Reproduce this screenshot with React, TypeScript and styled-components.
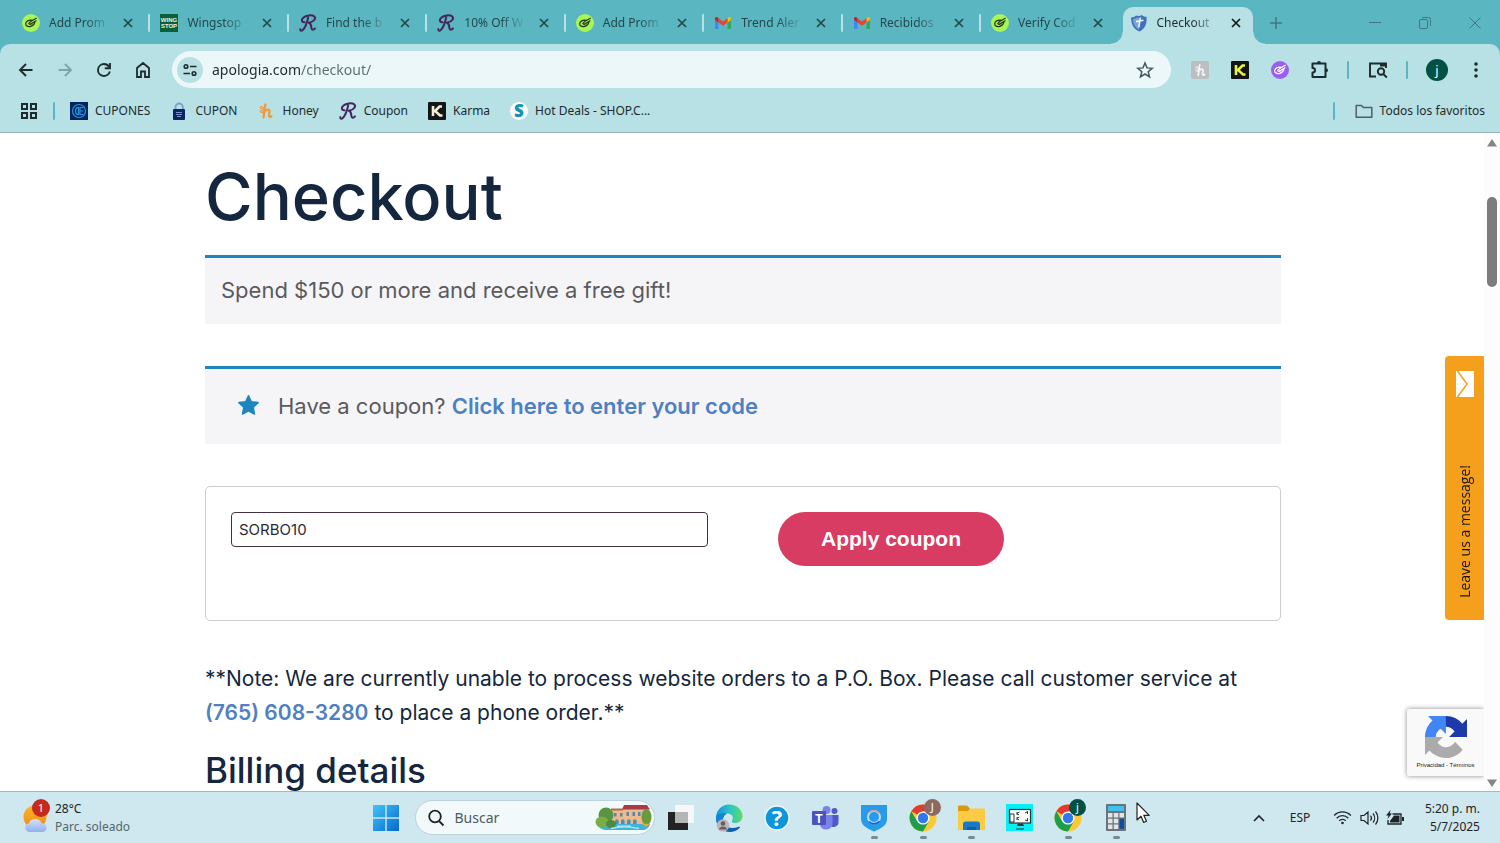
import React from "react";
import styled, { createGlobalStyle, css } from "styled-components";

const uiFont = `"Noto Sans", "Open Sans", sans-serif`;
const pageFont = `Inter, "Open Sans", sans-serif`;

const GlobalStyle = createGlobalStyle`
  *, *::before, *::after { box-sizing: border-box; }
  html, body { margin: 0; height: 100%; }
  body { background: #fff; font-family: ${uiFont}; }
  button, input { font: inherit; color: inherit; margin: 0; }
  button { background: none; border: 0; padding: 0; cursor: pointer; }
  svg { display: block; flex: none; overflow: visible; }
`;

/* ---------- window ---------- */

const Desktop = styled.div`
  display: flex;
  flex-direction: column;
  height: 100vh;
  overflow: hidden;
`;

/* ---------- tab strip ---------- */

const TabStrip = styled.header`
  display: flex;
  flex: none;
  height: 44px;
  background: #5ab6c0;
  color: #24474d;
`;

const TabList = styled.nav`
  display: flex;
  width: 83.8%;
  padding-left: 11px;
`;

const Tab = styled.div<{ $divider?: boolean }>`
  position: relative;
  display: flex;
  flex: 1 1 0;
  align-items: center;
  gap: 9px;
  min-width: 0;
  padding: 2px 15px 0 11px;

  ${(p) =>
    p.$divider &&
    css`
      &::after {
        content: "";
        position: absolute;
        right: -1px;
        top: 14px;
        width: 2px;
        height: 18px;
        border-radius: 1px;
        background: #b7e1e4;
      }
    `}
`;

const ActiveShape = styled.span`
  position: absolute;
  inset: 7px 4px 0 4px;
  border-radius: 10px 10px 0 0;
  background: #b7e1e4;

  &::before,
  &::after {
    content: "";
    position: absolute;
    bottom: 0;
    width: 12px;
    height: 12px;
  }
  &::before {
    left: -12px;
    background: radial-gradient(circle at 0 0, transparent 11px, #b7e1e4 12px);
  }
  &::after {
    right: -12px;
    background: radial-gradient(circle at 100% 0, transparent 11px, #b7e1e4 12px);
  }
`;

const TabIcon = styled.span`
  position: relative;
  flex: none;
  width: 18px;
  height: 18px;
`;

const TabTitle = styled.span<{ $active?: boolean }>`
  position: relative;
  flex: 1;
  min-width: 0;
  overflow: hidden;
  white-space: nowrap;
  font-size: 12px;
  line-height: 18px;
  color: ${(p) => (p.$active ? "#1d2b2e" : "#24474d")};
  mask-image: linear-gradient(90deg, #000 36px, transparent 62px);
`;

const TabClose = styled.button`
  position: relative;
  flex: none;
  width: 12px;
  height: 12px;
`;

const NewTab = styled.button`
  display: grid;
  place-items: center;
  width: 38px;
  padding-top: 2px;
`;

const WindowControls = styled.div`
  display: flex;
  margin-left: auto;
`;

const WindowButton = styled.button`
  display: grid;
  place-items: center;
  width: 50px;
  padding-top: 2px;
  color: #3f7780;
`;

/* ---------- toolbar and bookmarks ---------- */

const ChromeFrame = styled.div`
  flex: none;
  background: #5ab6c0;
`;

const ChromePanel = styled.div`
  border-bottom: 1px solid #94b4b9;
  border-radius: 10px 10px 0 0;
  background: #b7e1e4;
  color: #1d2b2e;
`;

const Toolbar = styled.div`
  display: flex;
  align-items: center;
  height: 51px;
  padding: 0 8px 0 6px;
`;

const ToolButton = styled.button<{ $width: number }>`
  display: grid;
  place-items: center;
  flex: none;
  width: ${(p) => p.$width}px;
  height: 36px;
`;

const Omnibox = styled.div`
  display: flex;
  flex: 1;
  align-items: center;
  height: 37px;
  margin: 0 9px 0 10px;
  padding: 0 17px 0 5px;
  border-radius: 19px;
  background: #ebf7f9;
`;

const SiteInfo = styled.button`
  display: grid;
  place-items: center;
  flex: none;
  width: 26px;
  height: 26px;
  border-radius: 50%;
  background: #b7e1e4;
`;

const AddressInput = styled.input`
  flex: 1;
  min-width: 0;
  padding: 0 0 0 9px;
  border: 0;
  outline: 0;
  background: linear-gradient(90deg, #1d2b2e 98px, #5b6c70 98px);
  background-clip: text;
  -webkit-text-fill-color: transparent;
  font-size: 14px;
  line-height: 20px;
`;

const Divider = styled.span`
  flex: none;
  width: 2px;
  height: 18px;
  border-radius: 1px;
  background: #5ab6c0;
`;

const Avatar = styled.span`
  display: grid;
  place-items: center;
  width: 22px;
  height: 22px;
  border-radius: 50%;
  background: #035045;
  color: #fff;
  font-size: 13px;
  line-height: 20px;
`;

const BookmarksBar = styled.nav`
  display: flex;
  align-items: center;
  gap: 15px;
  height: 37px;
  padding: 0 15px 6px 20px;
  font-size: 12px;
  line-height: 18px;
`;

const BookmarkGroup = styled.div<{ $end?: boolean }>`
  display: flex;
  align-items: center;
  gap: 20px;
  margin-left: ${(p) => (p.$end ? "auto" : 0)};
`;

const Bookmark = styled.a`
  display: flex;
  align-items: center;
  gap: 7px;
  white-space: nowrap;
  color: inherit;
  text-decoration: none;
`;

/* ---------- web page ---------- */

const Viewport = styled.div`
  position: relative;
  display: flex;
  flex: 1;
  min-height: 0;
`;

const Page = styled.main`
  flex: 1;
  min-width: 0;
  padding-left: 2px;
  overflow: hidden;
  background: #fff;
  font-family: ${pageFont};
`;

const Column = styled.div`
  max-width: 1076px;
  margin: 0 auto;
  padding-top: 24px;
  color: #14273e;
`;

const Title = styled.h1`
  margin: 0 0 18px;
  font-size: 65px;
  font-weight: 500;
  line-height: 80px;
`;

const Notice = styled.div<{ $roomy?: boolean }>`
  display: flex;
  align-items: center;
  gap: 18px;
  min-height: ${(p) => (p.$roomy ? 78 : 69)}px;
  margin-bottom: 42px;
  padding: ${(p) => (p.$roomy ? "0 32px 2px" : "0 16px 2px")};
  border-top: 3px solid #1e85be;
  background: #f5f5f8;
  color: #5a5a5e;
  font-size: 22px;
  line-height: 32px;
`;

const PageLink = styled.a`
  color: #4f80c1;
  font-weight: 600;
  text-decoration: none;
`;

const CouponForm = styled.form`
  display: grid;
  grid-template-columns: 1fr 1fr;
  align-items: start;
  gap: 70px;
  min-height: 135px;
  margin-bottom: 41px;
  padding: 25px;
  border: 1px solid #cfcdd1;
  border-radius: 5px;
`;

const CouponInput = styled.input`
  width: 100%;
  height: 35px;
  padding: 0 7px;
  border: 1px solid #43303c;
  border-radius: 4px;
  background: #fff;
  color: #2b2b33;
  font-size: 15px;
`;

const ApplyButton = styled.button`
  justify-self: start;
  height: 54px;
  padding: 0 43px;
  border-radius: 27px;
  background: #d83c63;
  color: #fff;
  font-family: "Liberation Sans", Arial, sans-serif;
  font-size: 21px;
  font-weight: 700;
`;

const Note = styled.p`
  margin: 0 0 19px;
  font-size: 21px;
  line-height: 34px;
`;

const Subtitle = styled.h2`
  margin: 0;
  font-size: 35px;
  font-weight: 500;
  line-height: 42px;
`;

const Scrollbar = styled.div`
  display: flex;
  flex: none;
  flex-direction: column;
  align-items: center;
  width: 16px;
  padding: 6px 0 4px;
  background: #fcfcfc;
`;

const ScrollThumb = styled.div`
  width: 10px;
  height: 90px;
  margin: 50px 0 auto;
  border-radius: 5px;
  background: #7d7d7d;
`;

const MessageTab = styled.button`
  position: absolute;
  top: 223px;
  right: 16px;
  display: flex;
  flex-direction: column;
  align-items: center;
  justify-content: space-between;
  width: 39px;
  height: 264px;
  padding: 15px 0 22px;
  border-radius: 4px 0 0 4px;
  background: #f4a01c;
  color: #1c1508;
`;

const MessageLabel = styled.span`
  writing-mode: vertical-rl;
  transform: rotate(180deg);
  font-family: "Open Sans", sans-serif;
  font-size: 14px;
  line-height: 20px;
`;

const CaptchaBadge = styled.aside`
  position: absolute;
  right: 16px;
  bottom: 15px;
  display: flex;
  flex-direction: column;
  align-items: center;
  gap: 3px;
  width: 77px;
  height: 67px;
  padding-top: 7px;
  border-radius: 2px 0 0 2px;
  background: #f9f9f9;
  box-shadow: 0 0 5px #888;
  clip-path: inset(-6px 0 -6px -6px);
  color: #222;
  font-family: "Liberation Sans", Arial, sans-serif;
  font-size: 6px;
  line-height: 8px;
  white-space: nowrap;
`;

/* ---------- taskbar ---------- */

const Taskbar = styled.footer`
  display: grid;
  grid-template-columns: 1fr auto 1fr;
  align-items: center;
  flex: none;
  height: 52px;
  border-top: 1px solid #a5b9bc;
  background: #cfe7ee;
  color: #1d2427;
  font-size: 12px;
  line-height: 18px;
`;

const Weather = styled.button`
  display: flex;
  align-items: center;
  gap: 5px;
  padding-left: 22px;
  text-align: left;
`;

const Muted = styled.span`
  display: block;
  color: #55666b;
`;

const WeatherIcon = styled.span`
  position: relative;
  width: 28px;
  height: 36px;
`;

const Badge = styled.span<{ $size: number; $color: string }>`
  position: absolute;
  top: -1px;
  right: 0;
  display: grid;
  place-items: center;
  width: ${(p) => p.$size}px;
  height: ${(p) => p.$size}px;
  border-radius: 50%;
  background: ${(p) => p.$color};
  color: #fff;
  font-size: 11px;
  line-height: 12px;
`;

const TaskCenter = styled.div`
  display: flex;
  align-items: center;
`;

const AppButton = styled.button<{ $open?: boolean }>`
  position: relative;
  display: grid;
  place-items: center;
  width: 100%;
  height: 50px;

  ${(p) =>
    p.$open &&
    css`
      &::after {
        content: "";
        position: absolute;
        bottom: 4px;
        left: calc(50% - 3px);
        width: 7px;
        height: 3px;
        border-radius: 2px;
        background: #7b8a8f;
      }
    `}
`;

const StartCell = styled.div`
  width: 52px;
  margin-right: 3px;
`;

const SearchBox = styled.label`
  display: flex;
  align-items: center;
  width: 240px;
  height: 35px;
  margin-right: 2px;
  padding: 0 2px 0 11px;
  border: 1px solid #bdd3d9;
  border-radius: 18px;
  background: #f1f9fb;
`;

const SearchInput = styled.input`
  flex: 1;
  min-width: 0;
  padding: 0 0 0 10px;
  border: 0;
  outline: 0;
  background: none;
  font-size: 14px;

  &::placeholder {
    color: #4f5b5f;
    opacity: 1;
  }
`;

const AppRow = styled.div`
  display: grid;
  grid-template-columns: repeat(10, 1fr);
  width: 484px;
`;

const AppCell = styled.div`
  position: relative;
`;

const Cursor = styled.svg`
  position: absolute;
  left: 44px;
  top: 9px;
`;

const AppIcon = styled.span`
  position: relative;
  display: grid;
  place-items: center;
  width: 36px;
  height: 36px;
`;

const Tray = styled.div`
  display: flex;
  align-items: center;
  justify-content: flex-end;
  padding-right: 20px;
`;

const TrayButton = styled.button<{ $width: number }>`
  display: grid;
  place-items: center;
  width: ${(p) => p.$width}px;
  height: 40px;
`;

const Clock = styled.button`
  width: 69px;
  text-align: right;
`;

/* ---------- icons ---------- */

const HandMark = ({ bg, fg }: { bg: string; fg: string }) => (
  <svg width="18" height="18" viewBox="0 0 18 18" fill="none" stroke={fg} strokeLinecap="round" strokeLinejoin="round">
    <circle cx="9" cy="9" r="9" fill={bg} stroke="none" />
    <path d="M10.300 6.300C7.500 5.400 4 7 3.700 9.600c-.3 2.500 2.500 3.400 5.100 2.700 2.200-.6 3.600-2 4-4M6.800 9.500c1.200-2.200 4-3.400 7.500-5.200M8.200 10.300l5.900-3.500M7 9.800c1 1 2.700.3 3.500-1" strokeWidth="1.200" />
  </svg>
);

const WingMark = () => (
  <svg width="18" height="18" viewBox="0 0 18 18">
    <rect width="18" height="18" fill="#0b6137" />
    <g fill="#e9f5ee" fontFamily="Liberation Sans, sans-serif" fontWeight="700" fontSize="6" textAnchor="middle">
      <text x="9" y="8">WING</text>
      <text x="9" y="14">STOP</text>
    </g>
  </svg>
);

const ScriptMark = () => (
  <svg width="18" height="18" viewBox="0 0 18 18" fill="none" stroke="#46245c" strokeWidth="2" strokeLinecap="round" strokeLinejoin="round">
    <path d="M9.200 3.500C8.200 8 6.700 13.500 3.500 16.300c-1.200.9-2.600.2-2.200-1.200M5.500 8.300C2.500 8.600 2 5.500 4.500 3.500 7 1.500 12.500.6 15 2.200c2.400 1.700.5 5.600-5.200 6.600 2.700.6 2.200 3.200 2.600 5.200.4 2.100 2 2.200 3.600.4" />
  </svg>
);

const MailMark = () => (
  <svg width="18" height="18" viewBox="0 0 18 18">
    <path d="M1 5v9.300c0 .5.400.7.800.7H4.500V8z" fill="#4285f4" />
    <path d="M17 5v9.300c0 .5-.4.7-.8.7H13.500V8z" fill="#34a853" />
    <path d="M13.500 4.200v4.200L17 5.800V4.600c0-1.600-1.700-2.200-2.800-1.200z" fill="#fbbc04" />
    <path d="M4.500 8.400V4.200L9 7.600l4.500-3.400v4.200L9 11.800z" fill="#ea4335" />
    <path d="M1 4.600v1.200l3.500 2.600V4.200l-.7-.6C2.700 2.500 1 3.200 1 4.600z" fill="#c5221f" />
  </svg>
);

const ShieldMark = () => (
  <svg width="18" height="18" viewBox="0 0 18 18">
    <path d="M1 3.500C3 3.600 5 2.800 6 1.500c1.800.8 4.200.6 6-.5 1 1.300 2.600 2 4.500 1.800C17.300 9.500 15 15 9.500 17.500 4 15.500 1.200 10.500 1 3.500z" fill="#3f72b8" />
    <path d="M3 5c1.600 0 3-.6 4-1.500L9 4v11.500C5 13.500 3.200 9.500 3 5z" fill="#7aa3d8" />
    <path d="M10.300 3.500L8.800 13.500M6 7.600l7.500-1.400" stroke="#f2f7fc" strokeWidth="1.600" fill="none" />
  </svg>
);

const CrossIcon = ({ color = "#24474d" }: { color?: string }) => (
  <svg width="12" height="12" viewBox="0 0 12 12" stroke={color} strokeWidth="1.700">
    <path d="M2 2l8 8M10 2l-8 8" />
  </svg>
);

const HoneyMark = ({ color }: { color: string }) => (
  <svg width="18" height="18" viewBox="0 0 18 18" fill="none" stroke={color} strokeLinecap="round" strokeLinejoin="round">
    <path d="M8.500 2.500C7 6 7.500 11 6.500 15.300M7.200 10.500c1.500-3.500 5.800-4 5.300-.6-.3 1.800-1 3.500-.2 4.700.5.800 1.500.5 2-.3" strokeWidth="2.300" />
    <path d="M7.200 6.800C4.500 7.500 2.500 5.900 3.500 4.900s3 .4 3.700 1.900zM7 10.300c-2.500.8-4.500-.2-3.500-1.300 1-.9 2.700.1 3.500 1.300z" strokeWidth="1.100" />
  </svg>
);

const KarmaMark = ({ color }: { color: string }) => (
  <svg width="18" height="18" viewBox="0 0 18 18">
    <rect width="18" height="18" rx="1" fill="#151515" />
    <path d="M5 4v10M14 4.500h-2.500L7 9l5 4.500h2.500" stroke={color} strokeWidth="2.600" fill="none" />
  </svg>
);

const CuponesMark = () => (
  <svg width="18" height="18" viewBox="0 0 18 18" fill="none" stroke="#1f97e0" strokeWidth="1.200">
    <rect width="18" height="18" fill="#06245c" stroke="none" />
    <circle cx="9" cy="9" r="6.500" />
    <path d="M8.500 5.500C4.500 4.800 4.500 13.200 8.500 12.500zM13.500 5.500H10v7h3.500M10 9h3.500" />
  </svg>
);

const LockMark = () => (
  <svg width="18" height="18" viewBox="0 0 18 18">
    <path d="M5.500 8V5.500a3.700 4 0 017.400 0V8" fill="none" stroke="#7d9fc4" strokeWidth="1.800" />
    <rect x="3" y="7" width="12" height="11" rx="1" fill="#0b2463" />
    <path d="M6 10.500h6M6 12.500h6M7 14.500h4" stroke="#7c91c4" strokeWidth="1" />
  </svg>
);

const ShopMark = () => (
  <svg width="18" height="18" viewBox="0 0 18 18">
    <circle cx="9" cy="9" r="9" fill="#fff" />
    <text x="9" y="15" textAnchor="middle" fontFamily="Open Sans, sans-serif" fontWeight="800" fontSize="17" fill="#0f93b8">S</text>
  </svg>
);

const line = { fill: "none", stroke: "currentColor" } as const;

const BackIcon = () => (
  <svg width="18" height="18" viewBox="0 0 18 18" {...line} strokeWidth="1.900"><path d="M15.500 9H3.500M9 3L3 9l6 6" /></svg>
);
const ForwardIcon = () => (
  <svg width="18" height="18" viewBox="0 0 18 18" fill="none" stroke="#7fa3a9" strokeWidth="1.900"><path d="M2.500 9h12M9 3l6 6-6 6" /></svg>
);
const ReloadIcon = () => (
  <svg width="18" height="18" viewBox="0 0 18 18" {...line} strokeWidth="1.900">
    <path d="M14.800 10.500A6 6 0 119 3c2.300 0 4.200 1.200 5.200 3" />
    <path d="M15 2v5.200H9.800" />
  </svg>
);
const HomeIcon = () => (
  <svg width="18" height="18" viewBox="0 0 18 18" {...line} strokeWidth="1.800">
    <path d="M3 7l6-5 6 5v9h-4v-5.500H7V16H3z" />
  </svg>
);
const TuneIcon = () => (
  <svg width="16" height="16" viewBox="0 0 16 16" {...line} strokeWidth="1.600">
    <circle cx="4" cy="4.500" r="1.800" /><path d="M8 4.500h6.500M1.500 11.500H8" /><circle cx="12" cy="11.500" r="1.800" />
  </svg>
);
const StarIcon = () => (
  <svg width="18" height="18" viewBox="0 0 18 18" fill="none" stroke="#46565a" strokeWidth="1.500">
    <path d="M9 2l2 4.900 5.200.4-4 3.400 1.300 5.100L9 13l-4.500 2.800 1.300-5.100-4-3.400L7 6.900z" />
  </svg>
);
const PuzzleIcon = () => (
  <svg width="20" height="20" viewBox="0 0 20 20" {...line} strokeWidth="2">
    <path d="M2.500 3.500h13v13.500h-13v-4.500c1.600 0 2.500-.8 2.500-2.200S4.100 8 2.500 8z" strokeLinejoin="round" />
    <path d="M7 3a2 2 0 014 0zM16 8.200a2 2 0 010 4z" fill="currentColor" stroke="none" />
  </svg>
);
const SidePanelIcon = () => (
  <svg width="20" height="18" viewBox="0 0 20 18" {...line} strokeWidth="1.900">
    <path d="M8 15.500H2V2.500h16V7" /><path d="M12 4h6" strokeWidth="3" />
    <circle cx="13" cy="10.500" r="3.200" /><path d="M15.300 13l3.500 3.500" />
  </svg>
);
const DotsIcon = () => (
  <svg width="6" height="18" viewBox="0 0 6 18" fill="currentColor">
    <circle cx="3" cy="3" r="1.800" /><circle cx="3" cy="9" r="1.800" /><circle cx="3" cy="15" r="1.800" />
  </svg>
);
const GridIcon = () => (
  <svg width="18" height="18" viewBox="0 0 18 18" {...line} strokeWidth="2">
    <rect x="2" y="2" width="5" height="5" /><rect x="11" y="2" width="5" height="5" />
    <rect x="2" y="11" width="5" height="5" /><rect x="11" y="11" width="5" height="5" />
  </svg>
);
const FolderLineIcon = () => (
  <svg width="18" height="18" viewBox="0 0 18 18" fill="none" stroke="#4d6165" strokeWidth="1.500">
    <path d="M1.200 3.500h5.300l1.800 2h8.500v9.700H1.200z" strokeLinejoin="round" />
  </svg>
);

const CouponStar = () => (
  <svg width="23" height="23" viewBox="0 0 24 24" fill="#1e85be" stroke="#1e85be" strokeWidth="1.600" strokeLinejoin="round">
    <path d="M12 1.800l3 6.300 7 .9-5.100 4.900 1.300 7L12 17.600l-6.200 3.300 1.300-7L2 9l7-.9z" />
  </svg>
);
const EnvelopeIcon = () => (
  <svg width="18" height="26" viewBox="0 0 18 26">
    <path d="M0 0h18v26H0z" fill="#fff" />
    <path d="M1.500 0L11 13 1.500 26" fill="none" stroke="#f4a01c" strokeWidth="1.500" />
  </svg>
);
const CaptchaIcon = () => (
  <svg width="42" height="42" viewBox="0 0 64 64">
    <path d="M64 31.955l-.033-1.370V4.687l-7.160 7.160C50.948 4.674 42.033.093 32.050.093c-10.400 0-19.622 4.960-25.458 12.640l11.736 11.860a15.550 15.550 0 0 1 4.754-5.334c2.050-1.600 4.952-2.906 8.968-2.906.485 0 .86.057 1.135.163 4.976.393 9.288 3.140 11.828 7.124l-8.307 8.307L64 31.953" fill="#1c3aa9" />
    <path d="M31.862.094l-1.370.033H4.594l7.160 7.160C4.580 13.147 0 22.060 0 32.046c0 10.400 4.960 19.622 12.640 25.458L24.500 45.768a15.550 15.550 0 0 1-5.334-4.754c-1.600-2.050-2.906-4.952-2.906-8.968 0-.485.057-.86.163-1.135.393-4.976 3.140-9.288 7.124-11.828l8.307 8.307L31.860.095" fill="#4285f4" />
    <path d="M.001 32.045l.033 1.370v25.898l7.160-7.160c5.860 7.173 14.774 11.754 24.760 11.754 10.400 0 19.622-4.960 25.458-12.640l-11.736-11.860a15.550 15.550 0 0 1-4.754 5.334c-2.050 1.600-4.952 2.906-8.968 2.906-.485 0-.86-.057-1.135-.163-4.976-.393-9.288-3.140-11.828-7.124l8.307-8.307c-10.522.040-22.400.066-27.295-.005" fill="#ababab" />
  </svg>
);

const WeatherArt = () => (
  <svg width="28" height="36" viewBox="0 0 28 36">
    <defs>
      <linearGradient id="sun" x2="0" y2="1"><stop stopColor="#fbb42a" /><stop offset="1" stopColor="#ef8a17" /></linearGradient>
      <linearGradient id="cloud" x2="0" y2="1"><stop stopColor="#d5e0fb" /><stop offset="1" stopColor="#8fb0ee" /></linearGradient>
    </defs>
    <circle cx="13" cy="17" r="11.500" fill="url(#sun)" />
    <path d="M7.500 32a4.300 4.300 0 01-.8-8.500 7 7 0 0113 0A4.300 4.300 0 0121 32z" fill="url(#cloud)" />
  </svg>
);
const StartIcon = () => (
  <svg width="26" height="26" viewBox="0 0 26 26">
    <defs><linearGradient id="start" x2="1" y2="1"><stop stopColor="#3fc5fa" /><stop offset="1" stopColor="#0669cc" /></linearGradient></defs>
    <path d="M0 0h12.300v12.300H0zM13.700 0H26v12.300H13.700zM0 13.700h12.300V26H0zM13.700 13.700H26V26H13.700z" fill="url(#start)" />
  </svg>
);
const SearchIcon = () => (
  <svg width="18" height="18" viewBox="0 0 18 18" {...line} strokeWidth="1.800"><circle cx="8" cy="7.500" r="5.800" /><path d="M12 12l4.500 4.500" /></svg>
);
const VillaArt = () => (
  <svg width="57" height="26" viewBox="0 0 57 26">
    <path d="M2 19h53c-1 4-4 6-8 6H12c-5 0-8-2-10-6z" fill="#3fb4d8" />
    <rect x="16" y="4" width="36" height="15" fill="#edb98e" />
    <path d="M29 0h23l3 4.500H27z" fill="#a93a48" />
    <path d="M16 3.500h12v2H16z" fill="#b8674c" />
    <path d="M19 8h2.500v3.500H19zM25 8h2.500v3.500H25zM31.500 7h2.500v4h-2.500zM37.500 7h2.500v4h-2.500zM43 7h2.500v4H43z" fill="#5a86a8" />
    <path d="M20 19v-3a1.800 1.800 0 013.600 0v3zM26 19v-3a1.800 1.800 0 013.600 0v3zM32 19v-3a1.800 1.800 0 013.600 0v3zM38 19v-3a1.800 1.800 0 013.600 0v3z" fill="#4d8fb5" />
    <ellipse cx="11" cy="10" rx="7.500" ry="7.500" fill="#5b9440" />
    <ellipse cx="7" cy="17" rx="6.500" ry="5.500" fill="#79ae47" />
    <ellipse cx="16" cy="19" rx="5" ry="4" fill="#4d8a3c" />
    <ellipse cx="51.500" cy="12" rx="5" ry="8" fill="#6b9a3c" />
    <path d="M46 18.500l9 .5-4 3z" fill="#e0a73c" />
    <path d="M16 23.500c8-2 18-2 28 0M22 21.200h14" stroke="#aee3f1" strokeWidth="1.300" fill="none" />
  </svg>
);
const TaskViewIcon = () => (
  <svg width="28" height="26" viewBox="0 0 28 26">
    <path d="M1 7h20v18H1z" fill="#232323" />
    <path d="M8 0h19v18H8z" fill="#f7f7f7" />
    <path d="M8 7h13v11H8z" fill="#b5b5b5" />
  </svg>
);
const EdgeIcon = () => (
  <svg width="28" height="28" viewBox="0 0 28 28">
    <defs>
      <linearGradient id="edgeTop" x2="1"><stop stopColor="#1b8fdc" /><stop offset=".5" stopColor="#2bc3c9" /><stop offset="1" stopColor="#5edc62" /></linearGradient>
    </defs>
    <path d="M1 14C1 6 7 .5 14 .5c8 0 13.500 5.500 13.500 11.500 0 4.500-3.700 7.200-8 7-2.600-.2-3.300-1.500-2.200-2.800C19 13.500 17 9.500 12.500 9.500 7 9.500 1.500 13 1 14z" fill="url(#edgeTop)" />
    <path d="M1 14c.5-3 6-5.500 10.500-4.200-3.500 2-4.500 6-2.500 9.700 2.500 4.500 8.500 5.500 14 3.500 1.500-.6 2.500-.3 1.800.8C22.500 26.500 19 28 15 28 7 28 .8 21.500 1 14z" fill="#0f5fb0" />
    <path d="M1 14c.5-3 6-5.500 10.500-4.200-5 2.700-5.500 9.500 0 16.200C5.500 26 .8 20.500 1 14z" fill="#1484d8" />
    <circle cx="8" cy="21.500" r="6.200" fill="#b9b5b8" />
    <circle cx="8" cy="19.500" r="2.300" fill="#665d60" /><path d="M4 25.500c.5-4 7.500-4 8 0z" fill="#665d60" />
  </svg>
);
const HelpIcon = () => (
  <svg width="26" height="26" viewBox="0 0 26 26">
    <circle cx="13" cy="13" r="12" fill="#0f95dc" stroke="#eef9fd" strokeWidth="1.500" />
    <text x="13" y="21" textAnchor="middle" fontFamily="Open Sans, sans-serif" fontWeight="700" fontSize="22" fill="#fff">?</text>
  </svg>
);
const TeamsIcon = () => (
  <svg width="27" height="26" viewBox="0 0 27 26">
    <circle cx="14.500" cy="5" r="4" fill="#7b83eb" /><circle cx="22.500" cy="6" r="3" fill="#5059c9" />
    <path d="M18 10h8.500v8a5 5 0 01-8 3z" fill="#5059c9" />
    <path d="M8 10h12.500v8.500a6.500 6.500 0 01-12.500 2z" fill="#7b83eb" />
    <rect x="0" y="6" width="14" height="14" rx="1" fill="#4b53bc" />
    <text x="7" y="17.500" textAnchor="middle" fontFamily="Liberation Sans, sans-serif" fontWeight="700" fontSize="12" fill="#fff">T</text>
  </svg>
);
const VpnIcon = () => (
  <svg width="26" height="28" viewBox="0 0 26 28">
    <path d="M0 1h26v14c0 6-5 9-13 12.500C5 24 0 21 0 15z" fill="#279bea" />
    <circle cx="13" cy="13" r="6" fill="none" stroke="#b7e0fb" strokeWidth="2" />
    <path d="M7.500 9a7 7 0 0111 .5" stroke="#ed8d7a" strokeWidth="1.300" fill="none" />
    <path d="M18.500 17a7 7 0 01-10.500.5" stroke="#1c62c4" strokeWidth="1.500" fill="none" />
  </svg>
);
const ChromeIcon = () => (
  <svg width="28" height="28" viewBox="0 0 28 28">
    <circle cx="14" cy="14" r="13.500" fill="#fcc934" />
    <path d="M14 14L2.300 7.300A13.500 13.500 0 0125.700 7.300H14z" fill="#e33b2e" />
    <path d="M2.300 7.300A13.500 13.500 0 0014 27.500l6-10.200-6-3.300-5.800 3.300z" fill="#1e9e4a" />
    <circle cx="14" cy="14" r="6.600" fill="#fff" /><circle cx="14" cy="14" r="5.200" fill="#2f78ee" />
  </svg>
);
const FolderIcon = () => (
  <svg width="27" height="26" viewBox="0 0 27 26">
    <path d="M0 2c0-1 .7-1.500 1.500-1.500H9L12 3.500V8H0z" fill="#d99a12" />
    <path d="M0 6h10l2.500-2.500H26c.7 0 1 .4 1 1V25H0z" fill="#fccb44" />
    <path d="M5 25v-6c0-1.500 1-2.500 2.500-2.500h12c1.500 0 2.500 1 2.500 2.500v6z" fill="#1779c8" />
    <path d="M9 22h9v3H9z" fill="#0f5ea6" />
  </svg>
);
const MonitorIcon = () => (
  <svg width="27" height="27" viewBox="0 0 27 27">
    <rect width="27" height="27" fill="#08f0f6" />
    <rect x="3.500" y="5.500" width="21" height="13.500" fill="#fff" stroke="#23383b" strokeWidth="1.200" />
    <path d="M12 19.500h5l1 2.500h-7z" fill="#23383b" />
    <path d="M4 10h4v8H4z" fill="#fff" stroke="#23383b" strokeWidth="1" />
    <path d="M11 8v3M13.500 8L11 9.500l2 1.500M11 13v3M13.500 13L11 14.500l2 1.500M19 9l2.500-1.500V10M19 16l2.500 1v-3M10 25h8" stroke="#23383b" strokeWidth="1" fill="none" />
  </svg>
);
const CalcIcon = () => (
  <svg width="20" height="27" viewBox="0 0 20 27">
    <rect width="20" height="27" rx="1" fill="#6b7378" />
    <rect x="2" y="2" width="16" height="5" fill="#41c1ee" />
    <path d="M2 9h4.500v4.500H2zM7.800 9h4.500v4.500H7.800zM13.500 9H18v4.500h-4.500zM2 14.700h4.500v4.500H2zM7.800 14.700h4.500v4.500H7.800zM2 20.400h4.500v4.500H2zM7.800 20.400h4.500v4.500H7.800z" fill="#dfe5e8" />
    <path d="M13.500 14.700H18v10.200h-4.500z" fill="#0d4f9c" />
  </svg>
);
const WifiIcon = () => (
  <svg width="19" height="15" viewBox="0 0 19 15" {...line} strokeWidth="1.300">
    <path d="M1.200 5.500a11.500 11.500 0 0116.600 0M3.700 8.200a8 8 0 0111.600 0M6.200 10.800a4.600 4.600 0 016.600 0" />
    <circle cx="9.500" cy="13" r="1.300" fill="currentColor" stroke="none" />
  </svg>
);
const VolumeIcon = () => (
  <svg width="19" height="16" viewBox="0 0 19 16" {...line} strokeWidth="1.200">
    <path d="M1 5.500h3l4-3.500v12l-4-3.500H1zM10.500 5.500a4 4 0 010 5M13 3.500a7 7 0 010 9M15.500 1.500a10 10 0 010 13" />
  </svg>
);
const BatteryIcon = () => (
  <svg width="18" height="16" viewBox="0 0 18 16">
    <path d="M6.500 4H15v10H2V10" fill="none" stroke="currentColor" strokeWidth="1.300" />
    <path d="M4 11l4-5.500h5.500v7H4zM16 7h2v4h-2zM4.500 0L0 5.500h2.500L1.500 9 6 3.500H3.800z" fill="currentColor" />
  </svg>
);

/* ---------- data ---------- */

const green = <HandMark bg="#a8f556" fg="#22321c" />;

const tabs = [
  { title: "Add Prom", icon: green },
  { title: "Wingstop", icon: <WingMark /> },
  { title: "Find the b", icon: <ScriptMark /> },
  { title: "10% Off W", icon: <ScriptMark /> },
  { title: "Add Prom", icon: green },
  { title: "Trend Aler", icon: <MailMark /> },
  { title: "Recibidos", icon: <MailMark /> },
  { title: "Verify Cod", icon: green },
  { title: "Checkout", icon: <ShieldMark />, active: true },
];

const bookmarks = [
  { label: "CUPONES", icon: <CuponesMark /> },
  { label: "CUPON", icon: <LockMark /> },
  { label: "Honey", icon: <HoneyMark color="#f09a3e" /> },
  { label: "Coupon", icon: <ScriptMark /> },
  { label: "Karma", icon: <KarmaMark color="#f3efd8" /> },
  { label: "Hot Deals - SHOP.C...", icon: <ShopMark /> },
];

const apps = [
  { name: "Task view", icon: <TaskViewIcon /> },
  { name: "Edge", icon: <EdgeIcon /> },
  { name: "Help", icon: <HelpIcon /> },
  { name: "Teams", icon: <TeamsIcon /> },
  { name: "VPN", icon: <VpnIcon />, open: true },
  { name: "Chrome J", icon: <ChromeIcon />, open: true, badge: "J", color: "#8a6a63" },
  { name: "Explorer", icon: <FolderIcon />, open: true },
  { name: "Remote screen", icon: <MonitorIcon /> },
  { name: "Chrome j", icon: <ChromeIcon />, open: true, badge: "j", color: "#035045" },
  { name: "Calculator", icon: <CalcIcon />, open: true, cursor: true },
];

/* ---------- app ---------- */

export default function App() {
  return (
    <Desktop>
      <GlobalStyle />
      <TabStrip>
        <TabList>
          {tabs.map((t, i) => (
            <Tab key={i} $divider={i < tabs.length - 2}>
              {t.active && <ActiveShape />}
              <TabIcon>{t.icon}</TabIcon>
              <TabTitle $active={t.active}>{t.title}</TabTitle>
              <TabClose aria-label="Close tab">
                <CrossIcon color={t.active ? "#10191b" : undefined} />
              </TabClose>
            </Tab>
          ))}
        </TabList>
        <NewTab aria-label="New tab">
          <svg width="12" height="12" viewBox="0 0 12 12" stroke="#3f7780" strokeWidth="1.500"><path d="M6 0v12M0 6h12" /></svg>
        </NewTab>
        <WindowControls>
          <WindowButton aria-label="Minimize">
            <svg width="12" height="12" viewBox="0 0 12 12" stroke="currentColor"><path d="M0 5.500h12" /></svg>
          </WindowButton>
          <WindowButton aria-label="Restore">
            <svg width="12" height="12" viewBox="0 0 12 12" {...line}><rect x=".5" y="2.500" width="8" height="9" rx="1.500" /><path d="M3 .5h6.500a2 2 0 012 2V9" /></svg>
          </WindowButton>
          <WindowButton aria-label="Close">
            <svg width="12" height="12" viewBox="0 0 12 12" stroke="currentColor"><path d="M.5.5l11 11M11.500.5l-11 11" /></svg>
          </WindowButton>
        </WindowControls>
      </TabStrip>

      <ChromeFrame>
        <ChromePanel>
          <Toolbar>
            <ToolButton $width={39} aria-label="Back"><BackIcon /></ToolButton>
            <ToolButton $width={39} aria-label="Forward"><ForwardIcon /></ToolButton>
            <ToolButton $width={39} aria-label="Reload"><ReloadIcon /></ToolButton>
            <ToolButton $width={39} aria-label="Home"><HomeIcon /></ToolButton>
            <Omnibox>
              <SiteInfo aria-label="Site information"><TuneIcon /></SiteInfo>
              <AddressInput aria-label="Address" defaultValue="apologia.com/checkout/" />
              <StarIcon />
            </Omnibox>
            <ToolButton $width={40} aria-label="Honey">
              <svg width="18" height="18" viewBox="0 0 18 18"><rect width="18" height="18" rx="2" fill="#bcbfc0" /><g transform="translate(2 2) scale(.8)"><HoneyMark color="#f4f4f4" /></g></svg>
            </ToolButton>
            <ToolButton $width={40} aria-label="Karma"><KarmaMark color="#e6f24a" /></ToolButton>
            <ToolButton $width={40} aria-label="Coupons"><HandMark bg="#9a5ff2" fg="#fff" /></ToolButton>
            <ToolButton $width={40} aria-label="Extensions"><PuzzleIcon /></ToolButton>
            <ToolButton as="span" $width={16}><Divider /></ToolButton>
            <ToolButton $width={44} aria-label="Side panel"><SidePanelIcon /></ToolButton>
            <ToolButton as="span" $width={14}><Divider /></ToolButton>
            <ToolButton $width={46} aria-label="Profile"><Avatar>j</Avatar></ToolButton>
            <ToolButton $width={32} aria-label="Menu"><DotsIcon /></ToolButton>
          </Toolbar>
          <BookmarksBar>
            <GridIcon />
            <Divider />
            <BookmarkGroup>
              {bookmarks.map((b) => (
                <Bookmark key={b.label} href="#">
                  {b.icon}
                  {b.label}
                </Bookmark>
              ))}
            </BookmarkGroup>
            <BookmarkGroup $end>
              <Divider />
              <Bookmark href="#">
                <FolderLineIcon />
                Todos los favoritos
              </Bookmark>
            </BookmarkGroup>
          </BookmarksBar>
        </ChromePanel>
      </ChromeFrame>

      <Viewport>
        <Page>
          <Column>
            <Title>Checkout</Title>
            <Notice>Spend $150 or more and receive a free gift!</Notice>
            <Notice $roomy>
              <CouponStar />
              <span>
                Have a coupon? <PageLink href="#">Click here to enter your code</PageLink>
              </span>
            </Notice>
            <CouponForm onSubmit={(e) => e.preventDefault()}>
              <CouponInput aria-label="Coupon code" defaultValue="SORBO10" />
              <ApplyButton>Apply coupon</ApplyButton>
            </CouponForm>
            <Note>
              **Note: We are currently unable to process website orders to a P.O. Box. Please call customer service at{" "}
              <PageLink href="#">(765) 608-3280</PageLink> to place a phone order.**
            </Note>
            <Subtitle>Billing details</Subtitle>
          </Column>
        </Page>
        <Scrollbar>
          <svg width="10" height="8" viewBox="0 0 10 8"><path d="M5 0l5 7.500H0z" fill="#858585" /></svg>
          <ScrollThumb />
          <svg width="10" height="8" viewBox="0 0 10 8"><path d="M5 8l5-7.500H0z" fill="#858585" /></svg>
        </Scrollbar>
        <MessageTab>
          <EnvelopeIcon />
          <MessageLabel>Leave us a message!</MessageLabel>
        </MessageTab>
        <CaptchaBadge>
          <CaptchaIcon />
          <span>Privacidad - Términos</span>
        </CaptchaBadge>
      </Viewport>

      <Taskbar>
        <Weather>
          <WeatherIcon>
            <WeatherArt />
            <Badge $size={18} $color="#c42b1c">1</Badge>
          </WeatherIcon>
          <span>
            28°C
            <Muted>Parc. soleado</Muted>
          </span>
        </Weather>
        <TaskCenter>
          <StartCell><AppButton aria-label="Start"><StartIcon /></AppButton></StartCell>
          <SearchBox>
            <SearchIcon />
            <SearchInput placeholder="Buscar" aria-label="Buscar" />
            <VillaArt />
          </SearchBox>
          <AppRow>
            {apps.map((a) => (
              <AppCell key={a.name}>
                <AppButton $open={a.open} aria-label={a.name}>
                  <AppIcon>
                    {a.icon}
                    {a.badge && <Badge $size={17} $color={a.color}>{a.badge}</Badge>}
                  </AppIcon>
                </AppButton>
                {a.cursor && (
                  <Cursor width="14" height="22" viewBox="0 0 14 22">
                    <path d="M1 1v17l4-3.700 2.700 6.200 2.800-1.200-2.700-6h5.400z" fill="#fff" stroke="#222" strokeWidth="1.200" strokeLinejoin="round" />
                  </Cursor>
                )}
              </AppCell>
            ))}
          </AppRow>
        </TaskCenter>
        <Tray>
          <TrayButton $width={32} aria-label="Hidden icons">
            <svg width="12" height="8" viewBox="0 0 12 8" {...line} strokeWidth="1.600"><path d="M1 7l5-5 5 5" /></svg>
          </TrayButton>
          <TrayButton $width={50}>ESP</TrayButton>
          <TrayButton $width={34} aria-label="Wi-Fi"><WifiIcon /></TrayButton>
          <TrayButton $width={20} aria-label="Volume"><VolumeIcon /></TrayButton>
          <TrayButton $width={32} aria-label="Battery"><BatteryIcon /></TrayButton>
          <Clock>
            5:20 p. m.
            <br />
            5/7/2025
          </Clock>
        </Tray>
      </Taskbar>
    </Desktop>
  );
}
